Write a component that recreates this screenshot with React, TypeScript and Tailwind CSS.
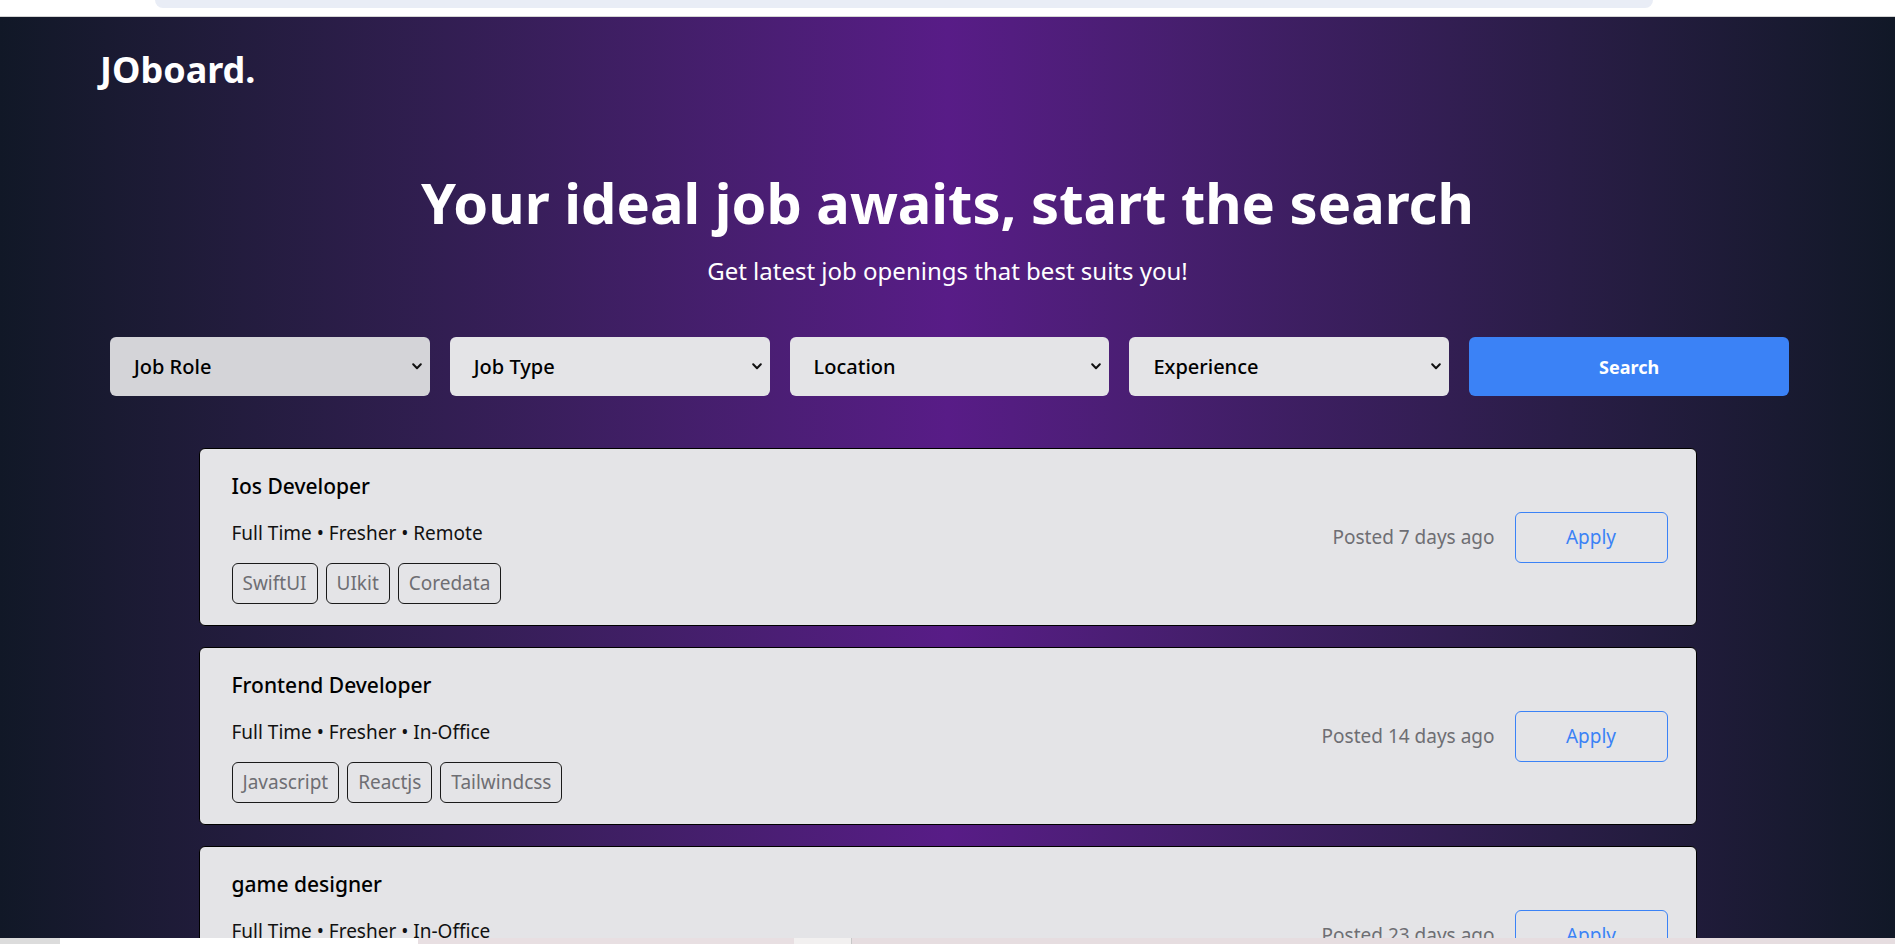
import React from "react";

type Job = {
  title: string;
  meta: string;
  tags: string[];
  posted: string;
};

const jobs: Job[] = [
  {
    title: "Ios Developer",
    meta: "Full Time • Fresher • Remote",
    tags: ["SwiftUI", "UIkit", "Coredata"],
    posted: "Posted 7 days ago",
  },
  {
    title: "Frontend Developer",
    meta: "Full Time • Fresher • In-Office",
    tags: ["Javascript", "Reactjs", "Tailwindcss"],
    posted: "Posted 14 days ago",
  },
  {
    title: "game designer",
    meta: "Full Time • Fresher • In-Office",
    tags: ["Unity", "Blender", "Photoshop"],
    posted: "Posted 23 days ago",
  },
];

function Chevron() {
  return (
    <svg width="10" height="7" viewBox="0 0 10 7" fill="none" className="shrink-0">
      <path d="M1.2 1.3 L5 5.2 L8.8 1.3" stroke="#111" strokeWidth="2" strokeLinecap="round" strokeLinejoin="round" />
    </svg>
  );
}

function FilterBox({ label, active }: { label: string; active?: boolean }) {
  return (
    <div
      className={
        active
          ? "flex h-[59px] items-center justify-between rounded-md bg-[#d4d4d8] pl-6 pr-2"
          : "flex h-[59px] items-center justify-between rounded-md bg-[#e4e4e7] pl-6 pr-2"
      }
    >
      <span className="text-[20px] font-medium text-black">{label}</span>
      <Chevron />
    </div>
  );
}

function JobCard({ job }: { job: Job }) {
  return (
    <div className="flex h-[178px] items-center justify-between rounded-md border border-black bg-[#e4e4e7] pl-8 pr-[28px]">
      <div className="flex flex-col pt-[1px]">
        <h3 className="text-[21px] font-medium leading-7 text-black">{job.title}</h3>
        <p className="mt-[19px] text-[19px] leading-7 text-[#111]">{job.meta}</p>
        <div className="mt-4 flex gap-2">
          {job.tags.map((t) => (
            <span
              key={t}
              className="flex h-[41px] items-center rounded-md border border-[#1a1a1a] px-[10px] text-[19px] text-[#6e6e73]"
            >
              {t}
            </span>
          ))}
        </div>
      </div>
      <div className="flex items-center gap-5">
        <span className="text-[19px] text-[#6e6e73]">{job.posted}</span>
        <button className="h-[51px] w-[153px] rounded-md border border-[#3b82f6] text-[19px] text-[#3b82f6]">
          Apply
        </button>
      </div>
    </div>
  );
}

export default function App() {
  return (
    <div className="min-h-screen font-['Noto_Sans',sans-serif]">
      <div className="h-[17px] border-b border-[#d4d4d4] bg-white">
        <div className="ml-[155px] h-[8px] w-[1498px] rounded-b-[10px] bg-[#e9edf6]" />
      </div>
      <main className="bg-gradient-to-r from-[#111827] via-[#581c87] to-[#111827] pb-16">
        <header className="px-[100px] pt-[33px]">
          <h1 className="text-4xl font-bold leading-10 text-white">JOboard.</h1>
        </header>
        <section className="mt-[82px] text-center">
          <h2 className="text-[56px] font-bold leading-[60px] text-white">
            Your ideal job awaits, start the search
          </h2>
          <p className="mt-[23px] text-2xl leading-8 text-white">
            Get latest job openings that best suits you!
          </p>
        </section>
        <div className="mt-[50px] grid grid-cols-5 gap-5 pl-[110px] pr-[106px]">
          <FilterBox label="Job Role" active />
          <FilterBox label="Job Type" />
          <FilterBox label="Location" />
          <FilterBox label="Experience" />
          <button className="h-[59px] rounded-md bg-[#3b82f6] text-lg font-bold text-white">
            Search
          </button>
        </div>
        <div className="mx-auto mt-[52px] flex w-[1498px] flex-col gap-[21px]">
          {jobs.map((j) => (
            <JobCard key={j.title} job={j} />
          ))}
        </div>
      </main>
      <div className="fixed bottom-0 left-0 right-0 flex h-[6px]">
        <div className="w-[60px] bg-[#dcdcdc]" />
        <div className="w-[358px] bg-white" />
        <div className="w-[376px] bg-[#e8dfe2]" />
        <div className="w-[58px] border-r border-[#c8c8c8] bg-[#f2f0f0]" />
        <div className="flex-1 bg-[#e6dde0]" />
      </div>
    </div>
  );
}
